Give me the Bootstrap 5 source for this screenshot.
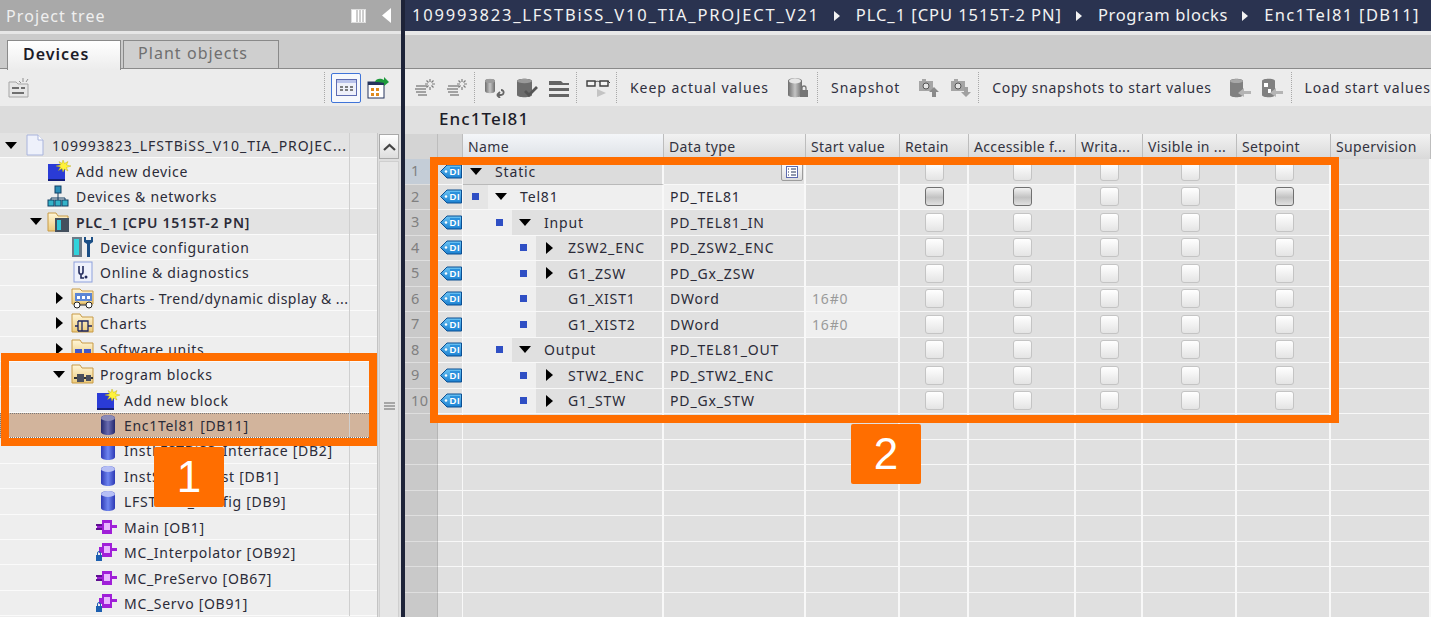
<!DOCTYPE html>
<html lang="en">
<head>
<meta charset="UTF-8">
<title>Project tree</title>
<link href="https://cdn.jsdelivr.net/npm/bootstrap@5.3.2/dist/css/bootstrap.min.css" rel="stylesheet">
<style>
body { margin: 0; width: 1431px; height: 617px; overflow: hidden; position: relative; background: #e0e0e0;
  font-family: "Noto Sans", "Open Sans", sans-serif; font-size: 14px; letter-spacing: .7px; color: #2b2b38; }
svg { display: block; flex: none; }
.left-pane { width: 401px; height: 617px; background: #eee; flex: none; }
.divider { width: 4px; height: 617px; background: #1d2338; flex: none; }
.right-pane { width: 1026px; height: 617px; flex: none; }

/* project tree header */
.pane-title { height: 31px; background: #a9a9a9; color: #efefef; font-size: 16px; letter-spacing: 1.1px; padding: 0 10px 0 6px; }
.tab-strip { height: 38px; background: #cbcbcb; border-top: 3px solid #e6e6e6; border-bottom: 1px solid #8a8a8a; padding: 6px 0 0 7px; gap: 2px; }
.tab-item { font-size: 16px; letter-spacing: 1.05px; border: 1px solid #8a8a8a; border-bottom: 0; padding-bottom: 3px; }
.tab-item.active { width: 114px; background: linear-gradient(#fff, #ececec); color: #1c1c28; font-weight: 600; margin-bottom: -1px; height: 30px; padding-left: 15px; letter-spacing: 1px; }
.tab-item.idle { width: 156px; background: #cfcfcf; color: #6f6f6f; padding-left: 14px; height: 28px; }
.tree-tools { height: 37px; background: #ececec; padding: 0 12px 0 8px; }
.sel-btn { width: 30px; height: 30px; border: 1px solid #3f74d8; border-radius: 2px; background: #f6f8fc; margin: 0 6px; }
.dash-sep { width: 0; height: 31px; border-left: 1px dotted #a8a8a8; }
.band { height: 27px; background: #dcdcdc; }
.tree-wrap { height: 484px; }
.tree-list { width: 377px; }
.tree-row { height: 25.45px; border-bottom: 1px solid #fafafa; background: #eee; position: relative; white-space: nowrap; }
.tree-row.group { background: #e3e3e3; }
.tree-row.current { background: #d2b49c; outline: 1px dotted #777; outline-offset: -1px; }
.tree-row.wide .lbl { letter-spacing: .95px; }
.tree-row.tight .lbl { letter-spacing: .46px; }
.tree-row::after { content: ""; position: absolute; left: 349px; top: 0; bottom: -1px; width: 1px; background: #cfcfcf; }
.lbl { overflow: hidden; max-width: 300px; margin-top: 1px; }
.scroll { width: 24px; background: #dedede; border-left: 1px solid #c4c4c4; }
.scroll-btn { height: 25px; margin: 1px 2px 0 1px; background: linear-gradient(#fff, #ddd); border: 1px solid #a9a9a9; }
.scroll-thumb { height: 458px; margin: 2px 2px 0 1px; background: #e6e6e6; border: 1px solid #cfcfcf; padding-top: 240px; }

/* editor side */
.crumbs { height: 31px; background: #2a3350; color: #f2f2f2; font-size: 16.5px; letter-spacing: .65px; padding-left: 7px; white-space: nowrap; }
.crumbs svg { margin: 0 16px 0 14px; }
.crumbs .c-project { letter-spacing: 1.8px; }
.crumbs .c-plc { letter-spacing: .95px; }
.crumbs .c-db { letter-spacing: 1.35px; }
.ed-top { height: 38px; background: #cbcbcb; border-top: 4px solid #e8e8e8; border-bottom: 1px solid #8a8a8a; }
.ed-tools { height: 37px; background: #ececec; padding-left: 9px; white-space: nowrap; overflow: hidden; font-size: 14px; letter-spacing: .95px; color: #30303e; }
.ed-tools .dash-sep { margin: 0 9px 0 -4px; }
.ed-tools .dash-sep.roomy { margin-left: -2px; }
.ed-tools .t { margin: 0 18px 0 4px; }
.ed-tools .t.copy { letter-spacing: .62px; margin-right: 17px; }
.ed-tools .t.load { margin-right: 0; letter-spacing: .85px; }
.ed-tools svg { margin-right: 10px; }
.ed-name { height: 27px; background: #e0e0e0; padding: 0 0 2px 34px; font-size: 17px; font-weight: 500; letter-spacing: 1.1px; color: #1c1c28; }

.g-row { display: grid; grid-template-columns: 33px 25px 201px 142px 94px 69px 107px 67px 94px 94px 100px; height: 25.5px; letter-spacing: .85px; }
.g-head { height: 25px; margin-top: 1px; font-size: 14px; letter-spacing: .35px; color: #33333f; }
.g-head > div { background: linear-gradient(#f2f2f2, #d9d9d9); border-right: 1px solid #bdbdbd; padding: 0 5px; white-space: nowrap; overflow: hidden; display: flex; align-items: center; }
.g-head > .hi { background: linear-gradient(#f4f6f9, #dde1e6); }
.g-head > .bare { background: #d4d4d4; }
.cell { border-right: 2px solid #f8f8f8; border-bottom: 1px solid #f8f8f8; background: #e0e0e0; display: flex; align-items: center; padding-left: 6px; white-space: nowrap; position: relative; }
.cell.lt { background: #efefef; }
.cell.num { background: #c9c9c9; border-right: 1px solid #b5b5b5; border-bottom-color: #dedede; color: #808080; font-size: 14.5px; letter-spacing: .4px; }
.cell.num.first { background: #c4cdd7; }
.cell.tag { padding-left: 2px; border-right-width: 1px; }
.cell.cc { justify-content: center; padding: 0 0 0 2px; }
.cell.val { color: #9a9a9a; }
.cell.name { padding-left: 0; }
.cell.name .mark { height: 100%; background: #efefef; display: flex; align-items: center; justify-content: flex-end; padding-right: 9px; flex: none; }
.cell.name .tri { width: 12px; margin: 0 13px 0 7px; flex: none; }
.cell.name.top { background: #dcdcdc; border-bottom: 1px solid #b9b9b9; }
.cell.name.sel { background: #efefef; }
.cell.name.sel .mark { background: #e5e5e5; }
.square { width: 7px; height: 7px; background: #2f4fc4; }
.drop { position: absolute; right: 1px; top: 3px; width: 22px; height: 19px; border: 1px solid #9c9c9c; border-radius: 2px; background: linear-gradient(#fff, #dcdcdc); }
.form-check-input.fb { width: 19px; height: 19px; margin: 0; border-radius: 3px; border: 1px solid #c4c4c4; background: linear-gradient(#fff, #e4e4e4); box-shadow: none; }
.form-check-input.fb.on { border-color: #707070; background: linear-gradient(#f2f2f2, #c2c2c2 55%, #e0e0e0); }

/* callouts on top of the screenshot */
.call-box { position: absolute; border: 8px solid #ff6e00; }
.box-one { left: 1px; top: 353px; width: 376px; height: 93px; }
.box-two { left: 430px; top: 157px; width: 909px; height: 266px; }
.call-num { position: absolute; width: 70px; height: 60px; background: #ff6e00; color: #fff; border-radius: 2px; font-family: "Liberation Sans", Arial, sans-serif; font-size: 44px; letter-spacing: 0; }
.num-one { left: 154px; top: 447px; }
.num-two { left: 851px; top: 424px; }
</style>
</head>
<body>
<svg width="0" height="0" class="position-absolute">
  <defs>
    <linearGradient id="bl" x1="0" x2="1"><stop offset="0" stop-color="#2d39b5"/><stop offset=".5" stop-color="#6f86f0"/><stop offset="1" stop-color="#2d39b5"/></linearGradient>
    <linearGradient id="bd" x1="0" x2="1"><stop offset="0" stop-color="#24286e"/><stop offset=".5" stop-color="#6a6cb0"/><stop offset="1" stop-color="#24286e"/></linearGradient>
    <linearGradient id="gr" x1="0" x2="1"><stop offset="0" stop-color="#6d6d6d"/><stop offset=".5" stop-color="#c4c4c4"/><stop offset="1" stop-color="#6d6d6d"/></linearGradient>
    <linearGradient id="fo" x1="0" x2="0" y2="1"><stop offset="0" stop-color="#fff6d8"/><stop offset="1" stop-color="#eccb7c"/></linearGradient>
    <linearGradient id="tg" x1="0" x2="0" y2="1"><stop offset="0" stop-color="#6cc4f4"/><stop offset="1" stop-color="#1a7fd0"/></linearGradient>
    <symbol id="i-tag" viewBox="0 0 22 15"><path d="M.5 7.500 7 1h14.500v13H7z" fill="url(#tg)" stroke="#0b4f92"/><circle cx="6" cy="7.500" r="1.300" fill="#fff"/><rect x="10" y="3" width="10" height="9" fill="#2a90dc"/><text x="15" y="11.200" text-anchor="middle" font-size="9.500" font-weight="700" fill="#fff" font-family="Liberation Sans">DI</text></symbol>
    <symbol id="i-file" viewBox="0 0 18 22"><path d="M1 1h11l5 5v15H1z" fill="#eef1fb" stroke="#a9b4dc"/><path d="M12 1v5h5" fill="#fff" stroke="#a9b4dc"/></symbol>
    <symbol id="i-new" viewBox="0 0 24 22"><rect x="1" y="4" width="17" height="16" fill="#2a3bd6"/><rect x="1" y="19" width="17" height="2" fill="#141e78"/><path d="M16 0l1.500 3.500L21 1.500 19.500 5 24 6l-4.500 1.500 1.500 3.500-3.500-2L16 12l-1-3.500-3.500 2 2-3.500L9 6l4.500-1L12 1.500 15 3.500z" fill="#fff23a" stroke="#b7a600" stroke-width=".4"/></symbol>
    <symbol id="i-net" viewBox="0 0 22 22"><rect x="8" y="1" width="6" height="7" fill="#2c8fb8" stroke="#123f63"/><path d="M11 8v5M4 13h14M4 13v2M11 13v2M18 13v2" stroke="#123f63" fill="none"/><rect x="1" y="15" width="6" height="6" fill="#34b3c9" stroke="#123f63"/><rect x="8" y="15" width="6" height="6" fill="#34b3c9" stroke="#123f63"/><rect x="15" y="15" width="6" height="6" fill="#34b3c9" stroke="#123f63"/></symbol>
    <symbol id="i-plc" viewBox="0 0 24 22"><path d="M1 20V2h8l2 3h10v15z" fill="url(#fo)" stroke="#c89a45"/><rect x="8" y="7" width="14" height="14" fill="#44505e"/><rect x="10" y="9" width="4" height="10" fill="#2fc6d6"/></symbol>
    <symbol id="i-cfg" viewBox="0 0 24 22"><rect x="1" y="1" width="10" height="20" fill="#6c7a88"/><rect x="3" y="3" width="5" height="16" fill="#30d3dc"/><path d="M13 1v5l3 2v13h3V8l3-2V1l-2 0v3h-5V1z" fill="#1b4f86"/></symbol>
    <symbol id="i-diag" viewBox="0 0 24 22"><rect x="3" y="1" width="18" height="20" fill="#eef1fb" stroke="#8da0dc"/><path d="M8 5v6c0 3 4 3 4 0V5M10 14v3h3" fill="none" stroke="#222b5c" stroke-width="1.600"/><circle cx="15" cy="16" r="1.500" fill="#222b5c"/></symbol>
    <symbol id="i-charts" viewBox="0 0 24 22"><path d="M1 17V2h8l2 2h11v13z" fill="url(#fo)" stroke="#c89a45"/><rect x="4" y="6" width="17" height="8" fill="#5b86d6"/><path d="M6 9h3v3H6zM11 9h3v3h-3zM16 9h3v3h-3z" fill="#fff"/><circle cx="6" cy="18" r="3" fill="#fff" stroke="#222"/><circle cx="18" cy="18" r="3" fill="#fff" stroke="#222"/><path d="M9 18h6" stroke="#222"/></symbol>
    <symbol id="i-chf" viewBox="0 0 24 22"><path d="M1 20V2h8l2 3h11v15z" fill="url(#fo)" stroke="#c89a45"/><path d="M4 14h3M7 9v10M7 9h10v10H7M11 9v10M17 14h4" fill="none" stroke="#1c2660" stroke-width="1.300"/></symbol>
    <symbol id="i-sw" viewBox="0 0 24 22"><path d="M1 20V2h8l2 3h11v15z" fill="url(#fo)" stroke="#c89a45"/><rect x="4" y="11" width="7" height="8" fill="#4257c8"/><rect x="13" y="11" width="7" height="8" fill="#4257c8"/></symbol>
    <symbol id="i-prog" viewBox="0 0 24 22"><path d="M1 20V2h8l2 3h11v15z" fill="url(#fo)" stroke="#c89a45"/><path d="M3 15h19" stroke="#333" stroke-width="2"/><rect x="6" y="11" width="7" height="8" fill="#4a4f5c"/><rect x="15" y="12" width="5" height="6" fill="#4a4f5c"/></symbol>
    <symbol id="i-db" viewBox="0 0 16 22"><path d="M1 4c0-4 14-4 14 0v14c0 4-14 4-14 0z" fill="url(#bl)"/><ellipse cx="8" cy="4" rx="7" ry="3" fill="#b6bff5"/></symbol>
    <symbol id="i-dbd" viewBox="0 0 16 22"><path d="M1 4c0-4 14-4 14 0v14c0 4-14 4-14 0z" fill="url(#bd)"/><ellipse cx="8" cy="4" rx="7" ry="3" fill="#8b8bb8"/></symbol>
    <symbol id="i-ob" viewBox="0 0 22 16"><path d="M1 5h5V1h10v5h5v3h-5v6H6v-4H1z" fill="#a01fd8"/><rect x="8" y="4" width="6" height="7" fill="#e9b6ff"/><path d="M0 5h6v2H0zM0 9h6v2H0z" fill="#5f0f90"/></symbol>
    <symbol id="i-obl" viewBox="0 0 22 20"><path d="M3 5h3V1h10v5h5v3h-5v6H6v-4H3z" fill="#a01fd8"/><rect x="8" y="4" width="6" height="7" fill="#e9b6ff"/><rect x="0" y="13" width="6" height="6" fill="#1c5fb0"/><path d="M1.500 13v-2a1.500 1.500 0 0 1 3 0v2" fill="none" stroke="#1c5fb0"/></symbol>
    <symbol id="i-down" viewBox="0 0 12 7"><path d="M0 0h12L6 7z" fill="#000"/></symbol>
    <symbol id="i-right" viewBox="0 0 7 12"><path d="M0 0v12l7-6z" fill="#000"/></symbol>
    <symbol id="t-mon" viewBox="0 0 22 20"><path d="M2 8h11M1 11h11M2 14h10M4 17h9" stroke="#a2a2a2" stroke-width="2"/><path d="M16 1v3M16 9v3M11 6h3M18 6h3M12.500 2.500l2 2M19.500 2.500l-2 2M12.500 9.500l2-2M19.500 9.500l-2-2" stroke="#7d7d7d" stroke-width="1.200"/></symbol>
    <symbol id="t-back" viewBox="0 0 22 20"><path d="M1 3c0-3 10-3 10 0v10c0 3-10 3-10 0z" fill="url(#gr)"/><ellipse cx="6" cy="3" rx="5" ry="2" fill="#9c9c9c"/><path d="M13 17h4c3 0 4-5 0-5M13 17l3-3M13 17l3 3" fill="none" stroke="#666" stroke-width="1.800"/></symbol>
    <symbol id="t-chk" viewBox="0 0 22 20"><path d="M1 3c0-3 15-3 15 0v14c0 3-15 3-15 0z" fill="#6c6c6c"/><ellipse cx="8.500" cy="3" rx="7.500" ry="2.200" fill="#9a9a9a"/><path d="M9 13l4 4 8-8" fill="none" stroke="#555" stroke-width="2.800"/></symbol>
    <symbol id="t-lines" viewBox="0 0 22 20"><path d="M1 3h12l2 2h6v2H1zM1 10h20v3H1zM1 16h20v3H1z" fill="#646464"/></symbol>
    <symbol id="t-glass" viewBox="0 0 24 20"><path d="M1 3h8v5H1zM14 3h8v5h-8z" fill="#f4f4f4" stroke="#3f3f3f" stroke-width="1.400"/><path d="M9 4c2-1 3-1 5 0M22 3l2 2" stroke="#3f3f3f" fill="none"/><path d="M11 11l9 4-9 4z" fill="#c4c4c4"/></symbol>
    <symbol id="t-lock" viewBox="0 0 22 22"><path d="M1 4c0-4 14-4 14 0v14c0 3-14 3-14 0z" fill="url(#gr)"/><ellipse cx="8" cy="4" rx="6" ry="2.500" fill="#e6e6e6"/><rect x="13" y="13" width="8" height="7" fill="#757575"/><path d="M15 13v-2a2 2 0 0 1 4 0v2" fill="none" stroke="#757575" stroke-width="1.300"/></symbol>
    <symbol id="t-cu" viewBox="0 0 22 20"><path d="M1 3h3V1h4v2h7v10H1z" fill="#a5a5a5"/><circle cx="8" cy="8" r="3" fill="#e4e4e4" stroke="#555"/><path d="M16 9l-5 5h3v5h4v-5h3z" fill="#8a8a8a"/></symbol>
    <symbol id="t-cd" viewBox="0 0 22 20"><path d="M1 3h3V1h4v2h7v10H1z" fill="#a5a5a5"/><circle cx="8" cy="8" r="3" fill="#e4e4e4" stroke="#555"/><path d="M16 19l-5-5h3V9h4v5h3z" fill="#a0a0a0"/></symbol>
    <symbol id="t-dl" viewBox="0 0 22 20"><path d="M1 3c0-3 13-3 13 0v14c0 3-13 3-13 0z" fill="#808080"/><ellipse cx="7.500" cy="3" rx="6.500" ry="2" fill="#a8a8a8"/><path d="M22 13h-7v-3l-6 5 6 4v-3h7z" fill="#b4b4b4"/></symbol>
    <symbol id="t-dg" viewBox="0 0 22 20"><path d="M1 3c0-3 13-3 13 0v14c0 3-13 3-13 0z" fill="#808080"/><rect x="3" y="5" width="4" height="4" fill="#fff"/><rect x="7" y="11" width="3" height="4" fill="#fff"/><path d="M22 13h-7v-3l-6 5 6 4v-3h7z" fill="#b4b4b4"/></symbol>
  </defs>
</svg>

<div class="d-flex">
  <div class="left-pane">
    <div class="pane-title d-flex align-items-center justify-content-between">
      <span>Project tree</span>
      <span class="d-flex align-items-center gap-3">
        <svg width="15" height="14" viewBox="0 0 15 14"><rect x=".5" y=".5" width="14" height="13" fill="#fff" stroke="#ddd"/><path d="M6 1v12M9 1v12M12 1v12" stroke="#9a9a9a"/></svg>
        <svg width="9" height="15" viewBox="0 0 9 15"><path d="M9 0v15L0 7.500z" fill="#fff"/></svg>
      </span>
    </div>
    <ul class="tab-strip nav list-unstyled d-flex m-0">
      <li class="tab-item active d-flex align-items-center">Devices</li>
      <li class="tab-item idle d-flex align-items-center">Plant objects</li>
    </ul>
    <div class="tree-tools d-flex align-items-center">
      <svg width="22" height="20" viewBox="0 0 22 20"><path d="M1 4h7l2 2h10v13H1z" fill="#e6e6e6" stroke="#a5a5a5"/><path d="M4 10h7M4 15h12M13 10h4" stroke="#6f6f6f" stroke-width="2"/><path d="M15 0v4M11 3l2 2M20 1l-2 3" stroke="#8f8f8f"/></svg>
      <span class="dash-sep ms-auto"></span>
      <span class="sel-btn d-flex align-items-center justify-content-center">
        <svg width="21" height="17" viewBox="0 0 21 17"><rect x=".5" y=".5" width="20" height="16" fill="#eef0fa" stroke="#5d6bb0"/><rect x="1" y="1" width="19" height="3" fill="#b9c2ea"/><path d="M4 8h3M9 8h3M14 8h3M4 11h3M9 11h3M14 11h3" stroke="#555" stroke-width="1.500"/></svg>
      </span>
      <svg width="22" height="22" viewBox="0 0 22 22"><rect x="1" y="5" width="16" height="16" fill="#fff" stroke="#26345c"/><rect x="1" y="5" width="16" height="3" fill="#26345c"/><path d="M4 11h3v3H4zM9 11h3v3H9zM4 16h3v3H4zM9 16h3v3H9z" fill="#e08a1e"/><path d="M8 5c1-4 6-4 9-2V0l5 5-5 4V6c-3-1-6-1-9-1z" fill="#1e9a3c"/></svg>
    </div>
    <div class="band"></div>
    <div class="tree-wrap d-flex">
      <div class="tree-list" id="tree"></div>
      <div class="scroll">
        <div class="scroll-btn d-flex align-items-center justify-content-center">
          <svg width="13" height="8" viewBox="0 0 13 8"><path d="M1 7l5.500-5L12 7" fill="none" stroke="#444" stroke-width="2.200"/></svg>
        </div>
        <div class="scroll-thumb d-flex justify-content-center">
          <svg width="11" height="9" viewBox="0 0 11 9"><path d="M0 1h11M0 4h11M0 7h11" stroke="#666"/></svg>
        </div>
      </div>
    </div>
  </div>
  <div class="divider"></div>
  <div class="right-pane">
    <div class="crumbs d-flex align-items-center">
      <span class="c-project">109993823_LFSTBiSS_V10_TIA_PROJECT_V21</span>
      <svg width="6" height="10" viewBox="0 0 6 10"><path d="M0 0v10l6-5z" fill="#f2f2f2"/></svg>
      <span class="c-plc">PLC_1 [CPU 1515T-2 PN]</span>
      <svg width="6" height="10" viewBox="0 0 6 10"><path d="M0 0v10l6-5z" fill="#f2f2f2"/></svg>
      <span>Program blocks</span>
      <svg width="6" height="10" viewBox="0 0 6 10"><path d="M0 0v10l6-5z" fill="#f2f2f2"/></svg>
      <span class="c-db">Enc1Tel81 [DB11]</span>
    </div>
    <div class="ed-top"></div>
    <div class="ed-tools d-flex align-items-center">
      <svg width="22" height="20"><use href="#t-mon"/></svg>
      <svg width="22" height="20"><use href="#t-mon"/></svg>
      <span class="dash-sep"></span>
      <svg width="22" height="20"><use href="#t-back"/></svg>
      <svg width="22" height="20"><use href="#t-chk"/></svg>
      <svg width="22" height="20"><use href="#t-lines"/></svg>
      <span class="dash-sep"></span>
      <svg width="24" height="20"><use href="#t-glass"/></svg>
      <span class="dash-sep"></span>
      <span class="t">Keep actual values</span>
      <svg width="22" height="22"><use href="#t-lock"/></svg>
      <span class="dash-sep roomy"></span>
      <span class="t">Snapshot</span>
      <svg width="22" height="20"><use href="#t-cu"/></svg>
      <svg width="22" height="20"><use href="#t-cd"/></svg>
      <span class="dash-sep"></span>
      <span class="t copy">Copy snapshots to start values</span>
      <svg width="22" height="20"><use href="#t-dl"/></svg>
      <svg width="22" height="20"><use href="#t-dg"/></svg>
      <span class="dash-sep roomy"></span>
      <span class="t load">Load start values</span>
    </div>
    <div class="ed-name d-flex align-items-center">Enc1Tel81</div>
    <div class="g-row g-head">
      <div class="bare"></div><div class="bare"></div><div class="hi">Name</div><div>Data type</div><div>Start value</div><div>Retain</div><div>Accessible f...</div><div>Writa...</div><div>Visible in ...</div><div>Setpoint</div><div>Supervision</div>
    </div>
    <div id="grid"></div>
  </div>
</div>

<div class="call-box box-one"></div>
<div class="call-box box-two"></div>
<div class="call-num num-one d-flex align-items-center justify-content-center">1</div>
<div class="call-num num-two d-flex align-items-center justify-content-center">2</div>

<script>
// [text, icon, icon width, twisty x, twisty, row class, icon x]
const treeRows = [
  ['109993823_LFSTBiSS_V10_TIA_PROJEC...', 'i-file', 18, 5, 'down', 'group wide', 26],
  ['Add new device', 'i-new', 24, 0, '', '', 47],
  ['Devices & networks', 'i-net', 22, 0, '', '', 47],
  ['PLC_1 [CPU 1515T-2 PN]', 'i-plc', 24, 30, 'down', 'group fw-semibold', 47],
  ['Device configuration', 'i-cfg', 24, 0, '', '', 71],
  ['Online & diagnostics', 'i-diag', 24, 0, '', '', 71],
  ['Charts - Trend/dynamic display & ...', 'i-charts', 24, 55, 'right', 'tight', 71],
  ['Charts', 'i-chf', 24, 55, 'right', '', 71],
  ['Software units', 'i-sw', 24, 55, 'right', '', 71],
  ['Program blocks', 'i-prog', 24, 53, 'down', '', 71],
  ['Add new block', 'i-new', 24, 0, '', '', 96],
  ['Enc1Tel81 [DB11]', 'i-dbd', 16, 0, '', 'current', 100],
  ['InstLFSTBiSS_Interface [DB2]', 'i-db', 16, 0, '', '', 100],
  ['InstStartupTest [DB1]', 'i-db', 16, 0, '', '', 100],
  ['LFSTBiSS_Config [DB9]', 'i-db', 16, 0, '', '', 100],
  ['Main [OB1]', 'i-ob', 22, 0, '', '', 96],
  ['MC_Interpolator [OB92]', 'i-obl', 22, 0, '', '', 96],
  ['MC_PreServo [OB67]', 'i-ob', 22, 0, '', '', 96],
  ['MC_Servo [OB91]', 'i-obl', 22, 0, '', '', 96]
];

const tree = document.getElementById('tree');
treeRows.forEach(([text, icon, w, twX, tw, cls, iconX]) => {
  const row = document.createElement('div');
  row.className = 'tree-row d-flex align-items-center ' + cls;
  let twisty = '';
  if (tw === 'down') twisty = `<svg class="position-absolute" style="left:${twX}px" width="12" height="7"><use href="#i-down"/></svg>`;
  if (tw === 'right') twisty = `<svg class="position-absolute" style="left:${twX + 1}px" width="7" height="12"><use href="#i-right"/></svg>`;
  const textX = icon === 'i-file' ? 52 : (iconX >= 96 ? 124 : (iconX >= 71 ? 100 : 76));
  row.innerHTML = `${twisty}<svg class="position-absolute" style="left:${iconX}px" width="${w}" height="22"><use href="#${icon}"/></svg>
    <span class="lbl position-absolute" style="left:${textX}px">${text.replace('&', '&amp;')}</span>`;
  tree.appendChild(row);
});

// [name, level, twisty, data type, start value]
const vars = [
  ['Static', -1, 'down', '', ''],
  ['Tel81', 0, 'down', 'PD_TEL81', ''],
  ['Input', 1, 'down', 'PD_TEL81_IN', ''],
  ['ZSW2_ENC', 2, 'right', 'PD_ZSW2_ENC', ''],
  ['G1_ZSW', 2, 'right', 'PD_Gx_ZSW', ''],
  ['G1_XIST1', 2, '', 'DWord', '16#0'],
  ['G1_XIST2', 2, '', 'DWord', '16#0'],
  ['Output', 1, 'down', 'PD_TEL81_OUT', ''],
  ['STW2_ENC', 2, 'right', 'PD_STW2_ENC', ''],
  ['G1_STW', 2, 'right', 'PD_Gx_STW', '']
];

const grid = document.getElementById('grid');
let html = '';
vars.forEach(([name, level, tw, type, start], i) => {
  const sel = i === 1;
  const markW = level < 0 ? 0 : 25 + level * 24;
  const mark = level < 0 ? '' : `<span class="mark" style="width:${markW}px"><span class="square"></span></span>`;
  let tri = '<span class="tri"></span>';
  if (tw === 'down') tri = '<span class="tri"><svg width="12" height="7"><use href="#i-down"/></svg></span>';
  if (tw === 'right') tri = '<span class="tri d-flex justify-content-center"><svg width="7" height="12"><use href="#i-right"/></svg></span>';
  const box = on => `<input type="checkbox" class="form-check-input fb${on ? ' on' : ''}" aria-label="option">`;
  const cc = (on, lt) => `<div class="cell cc${lt ? ' lt' : ''}">${box(on)}</div>`;
  html += `<div class="g-row">
    <div class="cell num${i === 0 ? ' first' : ''}">${i + 1}</div>
    <div class="cell tag"><svg width="22" height="15"><use href="#i-tag"/></svg></div>
    <div class="cell name${i === 0 ? ' top' : ''}${sel ? ' sel' : ''}">${mark}${tri}<span>${name}</span></div>
    <div class="cell${sel ? ' lt' : ''}">${type}${i === 0 ? '<span class="drop d-flex align-items-center justify-content-center"><svg width="12" height="12" viewBox="0 0 12 12"><rect x=".5" y=".5" width="11" height="11" fill="#fff" stroke="#5d6bb0"/><path d="M2 3h1M5 3h5M2 6h1M5 6h5M2 9h1M5 9h5" stroke="#26345c"/></svg></span>' : ''}</div>
    <div class="cell val${start ? ' lt' : ''}">${start}</div>
    ${cc(sel, sel)}${cc(sel, sel)}${cc(false, false)}${cc(false, false)}${cc(sel, sel)}
    <div class="cell"></div>
  </div>`;
});
for (let i = 0; i < 8; i++) {
  html += `<div class="g-row"><div class="cell num"></div><div class="cell tag"></div>${'<div class="cell"></div>'.repeat(9)}</div>`;
}
grid.innerHTML = html;
</script>
<script src="https://cdn.jsdelivr.net/npm/bootstrap@5.3.2/dist/js/bootstrap.bundle.min.js"></script>
</body>
</html>
